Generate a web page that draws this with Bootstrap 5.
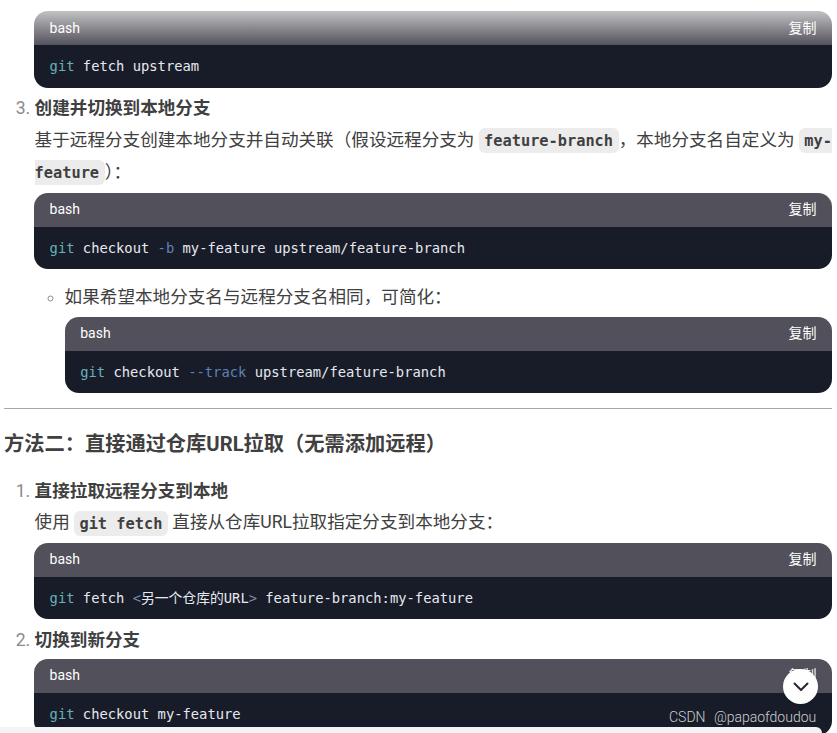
<!DOCTYPE html>
<html lang="zh-CN">
<head>
<meta charset="utf-8">
<title>方法二</title>
<link href="https://cdn.jsdelivr.net/npm/bootstrap@5.3.0/dist/css/bootstrap.min.css" rel="stylesheet">
<style>
html,body{height:733px;overflow:hidden;background:#fff;}
body{font-family:Roboto,"Noto Sans CJK SC",sans-serif;font-size:17.6px;line-height:31.68px;color:#404040;position:relative;}
.article{width:828px;margin-left:4px;padding-top:11.3px;overflow:hidden;height:733px;}
.steps{list-style:decimal;padding-left:30.6px;margin:0;}
.steps>li::marker{color:#8b8b8b;font-weight:400;}
.steps>li>.snip{margin-left:-.6px;}
.step-title{font-weight:700;margin:0 0 -1.7px;padding-top:1.7px;}
.para{margin:1.1px -3px 0 0;line-height:32px;}
.para-tight{margin-top:.5px;}
.sub-list{list-style:circle;padding-left:30px;margin:11.8px 0 0;}
.sub-list>li::marker{color:#8b8b8b;}
.sub-list .para{margin:0 0 -1.3px;padding-top:1.3px;line-height:31.68px;}
.snip{border-radius:14px;overflow:hidden;margin:5px 0 0;}
.snip-head{height:34px;background:#52505a;color:#fff;font-size:14px;line-height:33px;padding:0 15.6px;}
.snip-fade{background:linear-gradient(#c2c1c4,#54525c);line-height:34px;}
.snip-body{height:42.4px;background:#181c28;color:#e6e9ef;font-family:"DejaVu Sans Mono","Noto Sans CJK SC",monospace;font-size:13.8px;line-height:42px;padding:0 15.6px;white-space:pre;}
.tk-cmd{color:#66b2b8;}
.tk-flag{color:#5b83b8;}
.tk-ang{color:#7c8ea8;}
.inl{font-family:"DejaVu Sans Mono",monospace;font-size:15.3px;line-height:1;font-weight:700;background:#ececec;color:#404040;border-radius:6px;padding:3.5px 5.6px;margin-left:-.3px;-webkit-box-decoration-break:slice;box-decoration-break:slice;}
.rule{margin:14.6px 0 0;border:0;border-top:1px solid #a8a8a8;opacity:1;}
.sec-title{font-size:20.24px;font-weight:700;line-height:32px;margin:19.6px 0 -.6px;color:#404040;}
.gap-after-title{margin-top:14.2px;}
.bottom-strip{position:absolute;left:0;bottom:0;width:822px;height:6px;background:#f3f4f6;border-top-right-radius:10px;}
.down-btn{position:absolute;left:783px;top:669px;width:35px;height:35px;background:#fff;border-radius:50%;box-shadow:0 0 4px rgba(0,0,0,.08);}
.mark-csdn{position:absolute;left:669px;top:707px;font-size:14px;line-height:20px;color:#cfcfd4;font-weight:300;word-spacing:5px;white-space:nowrap;}
</style>
</head>
<body>
<div class="article">
  <div class="snip" style="margin:0 0 0 30px">
    <div class="snip-head snip-fade d-flex justify-content-between"><span>bash</span><span>复制</span></div>
    <div class="snip-body"><span class="tk-cmd">git</span> fetch upstream</div>
  </div>
  <ol class="steps" start="3" style="margin-top:3.5px">
    <li>
      <p class="step-title">创建并切换到本地分支</p>
      <p class="para">基于远程分支创建本地分支并自动关联（假设远程分支为 <code class="inl">feature-branch</code>，本地分支名自定义为 <code class="inl">my-feature</code>）：</p>
      <div class="snip" style="margin-top:4.8px">
        <div class="snip-head d-flex justify-content-between"><span>bash</span><span>复制</span></div>
        <div class="snip-body"><span class="tk-cmd">git</span> checkout <span class="tk-flag">-b</span> my-feature upstream/feature-branch</div>
      </div>
      <ul class="sub-list">
        <li>
          <p class="para">如果希望本地分支名与远程分支名相同，可简化：</p>
          <div class="snip" style="margin-top:4px">
            <div class="snip-head d-flex justify-content-between"><span>bash</span><span>复制</span></div>
            <div class="snip-body"><span class="tk-cmd">git</span> checkout <span class="tk-flag">--track</span> upstream/feature-branch</div>
          </div>
        </li>
      </ul>
    </li>
  </ol>
  <hr class="rule">
  <h3 class="sec-title">方法二：直接通过仓库URL拉取（无需添加远程）</h3>
  <ol class="steps gap-after-title">
    <li>
      <p class="step-title">直接拉取远程分支到本地</p>
      <p class="para para-tight">使用 <code class="inl">git fetch</code> 直接从仓库URL拉取指定分支到本地分支：</p>
      <div class="snip" style="margin-top:4.9px">
        <div class="snip-head d-flex justify-content-between"><span>bash</span><span>复制</span></div>
        <div class="snip-body"><span class="tk-cmd">git</span> fetch <span class="tk-ang">&lt;</span>另一个仓库的URL<span class="tk-ang">&gt;</span> feature-branch:my-feature</div>
      </div>
    </li>
    <li>
      <p class="step-title" style="margin-top:3.8px">切换到新分支</p>
      <div class="snip" style="margin-top:4.1px">
        <div class="snip-head d-flex justify-content-between"><span>bash</span><span>复制</span></div>
        <div class="snip-body"><span class="tk-cmd">git</span> checkout my-feature</div>
      </div>
    </li>
  </ol>
</div>
<div class="bottom-strip"></div>
<div class="down-btn d-flex align-items-center justify-content-center">
  <svg width="18" height="18" viewBox="0 0 18 18" fill="none"><path d="M2.5 5.5 9 12l6.5-6.5" stroke="#26262b" stroke-width="2" stroke-linecap="round" stroke-linejoin="round"/></svg>
</div>
<div class="mark-csdn">CSDN @papaofdoudou</div>
<script src="https://cdn.jsdelivr.net/npm/bootstrap@5.3.0/dist/js/bootstrap.bundle.min.js"></script>
</body>
</html>
